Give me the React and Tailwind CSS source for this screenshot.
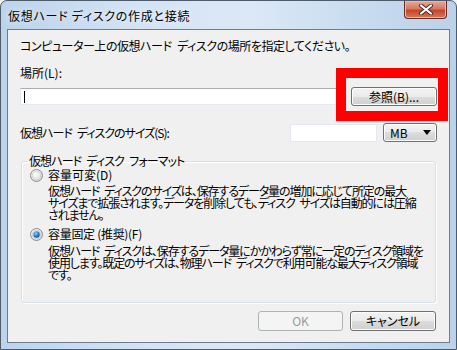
import React from "react";

const jp = "font-['Noto_Sans_CJK_JP','Noto_Sans',sans-serif] [font-feature-settings:'palt']";
const sp = "\u2002";

function Radio({ checked }) {
  return (
    <svg width="13" height="13" viewBox="0 0 13 13" className="shrink-0">
      <defs>
        <radialGradient id={checked ? "rgOn" : "rgOff"} cx="0.4" cy="0.35" r="0.7">
          <stop offset="0" stopColor="#ffffff" />
          <stop offset="1" stopColor="#d4d6d8" />
        </radialGradient>
        <radialGradient id="dot" cx="0.4" cy="0.35" r="0.7">
          <stop offset="0" stopColor="#8fd0ff" />
          <stop offset="0.6" stopColor="#2b7fc9" />
          <stop offset="1" stopColor="#123f73" />
        </radialGradient>
      </defs>
      <circle cx="6.5" cy="6.5" r="6" fill={`url(#${checked ? "rgOn" : "rgOff"})`} stroke="#8a8e92" />
      <circle cx="6.5" cy="6.5" r="4.2" fill="none" stroke="#c8cbce" strokeWidth="0.8" />
      {checked && <circle cx="6.5" cy="6.5" r="3.2" fill="url(#dot)" />}
    </svg>
  );
}

function Button({ children, disabled, className = "" }) {
  return (
    <div
      className={
        "flex items-center justify-center rounded-[3px] border text-[12px] leading-none " +
        (disabled
          ? "border-[#adb2b5] bg-[#f4f4f4] text-[#9a9a9a] "
          : "border-[#707070] bg-[linear-gradient(#f2f2f2_0%,#ebebeb_50%,#dddddd_50%,#cfcfcf_100%)] text-black shadow-[inset_0_0_0_1px_#fcfcfc] ") +
        className
      }
    >
      {children}
    </div>
  );
}

export default function App() {
  return (
    <div className={`w-[457px] h-[350px] overflow-hidden bg-[#f0f0f0] ${jp}`}>
      <div className="relative h-[350px] w-[457px] rounded-t-[7px] border border-[#4d5b6b] bg-[linear-gradient(90deg,#bcd3eb_0%,#d3e3f4_30%,#dbe8f6_55%,#c7dbef_80%,#bad2ea_100%)]">
        {/* title bar */}
        <div className="flex h-[28px] items-start justify-between">
          <div className="pl-[7px] pt-[7px] text-[12px] leading-[16px] tracking-[0.7px] text-black [text-shadow:0_0_6px_#ffffff]">
            仮想ハード ディスクの作成と接続
          </div>
          <div className="mr-[9px] flex h-[18px] w-[43px] items-center justify-center rounded-b-[4px] border border-t-0 border-[#6b2a22] bg-[linear-gradient(#e9a99c_0%,#d7775f_45%,#c4452b_55%,#d27a5f_100%)] shadow-[inset_0_0_0_1px_#f0b5a8]">
            <svg width="14" height="11" viewBox="0 0 14 11">
              <path d="M2 1.5 L12 9.5 M12 1.5 L2 9.5" stroke="#4a2a24" strokeWidth="4" strokeLinecap="round" />
              <path d="M2 1.5 L12 9.5 M12 1.5 L2 9.5" stroke="#ffffff" strokeWidth="2.2" strokeLinecap="round" />
            </svg>
          </div>
        </div>

        {/* client area */}
        <div className="relative ml-[6px] h-[314px] w-[443px] border border-[#6d7d8f] bg-[#f0f0f0] text-[12px] text-black">
          <div className="px-[12px] pt-[8px]">
            <div className="leading-[16px] tracking-[-0.45px] whitespace-nowrap">
              {`コンピューター上の仮想ハード${sp}ディスクの場所を指定してください。`}
            </div>
            <div className="mt-[11px] leading-[16px]">場所(L):</div>

            <div className="mt-[6px] flex items-center gap-[7px]">
              <div className="flex h-[17px] flex-1 items-center border border-[#e3e9ef] border-t-[#abadb3] bg-white pl-[3px]">
                <div className="h-[12px] w-px bg-black" />
              </div>
              <Button className="h-[19px] w-[86px]">参照(B)...</Button>
            </div>

            <div className="mt-[17px] flex items-center">
              <div className="flex-1 leading-[16px] tracking-[-1px]">{`仮想ハード${sp}ディスクのサイズ(S):`}</div>
              <div className="h-[18px] w-[87px] border border-[#e3e9ef] bg-white" />
              <div className="ml-[6px] flex h-[19px] w-[54px] items-center justify-between rounded-[3px] border border-[#707070] bg-[linear-gradient(#f2f2f2_0%,#ebebeb_50%,#dddddd_50%,#cfcfcf_100%)] pl-[6px] pr-[5px] shadow-[inset_0_0_0_1px_#fcfcfc]">
                <span className="leading-none">MB</span>
                <svg width="8" height="5" viewBox="0 0 8 5">
                  <path d="M0 0 H8 L4 5 Z" fill="#000" />
                </svg>
              </div>
            </div>

            <fieldset className="ml-px mr-px mt-[11px] h-[150px] rounded-[3px] border border-[#d5dfe5] px-[8px] shadow-[inset_1px_1px_0_#ffffff,1px_1px_0_#ffffff]">
              <legend className="-ml-[2px] px-[1px] leading-[16px] tracking-[-0.9px]">{`仮想ハード${sp}ディスク${sp}フォーマット`}</legend>
              <div className="-mt-[2px] flex items-center gap-[5px]">
                <Radio />
                <span className="leading-[16px]">容量可変(D)</span>
              </div>
              <div className="mt-[2px] pl-[18px] leading-[12px] tracking-[-1.1px] whitespace-nowrap">
                <div>{`仮想ハード${sp}ディスクのサイズは、保存するデータ量の増加に応じて所定の最大`}</div>
                <div>{`サイズまで拡張されます。データを削除しても、ディスク${sp}サイズは自動的には圧縮`}</div>
                <div>されません。</div>
              </div>
              <div className="mt-[5px] flex items-center gap-[5px]">
                <Radio checked />
                <span className="leading-[16px] tracking-[-0.3px]">容量固定 (推奨)(F)</span>
              </div>
              <div className="mt-[3px] pl-[18px] leading-[12px] tracking-[-1.1px] whitespace-nowrap">
                <div>{`仮想ハード${sp}ディスクは、保存するデータ量にかかわらず常に一定のディスク領域を`}</div>
                <div>{`使用します。既定のサイズは、物理ハード${sp}ディスクで利用可能な最大ディスク領域`}</div>
                <div>です。</div>
              </div>
            </fieldset>

            <div className="mt-[8px] flex justify-end gap-[7px] pr-px">
              <Button disabled className="h-[20px] w-[85px]">OK</Button>
              <Button className="h-[20px] w-[86px]">キャンセル</Button>
            </div>
          </div>

          {/* red annotation box */}
          <div className="absolute left-[328px] top-[38px] h-[53px] w-[112px] border-[10px] border-[#ff0000]" />
        </div>
      </div>
    </div>
  );
}
